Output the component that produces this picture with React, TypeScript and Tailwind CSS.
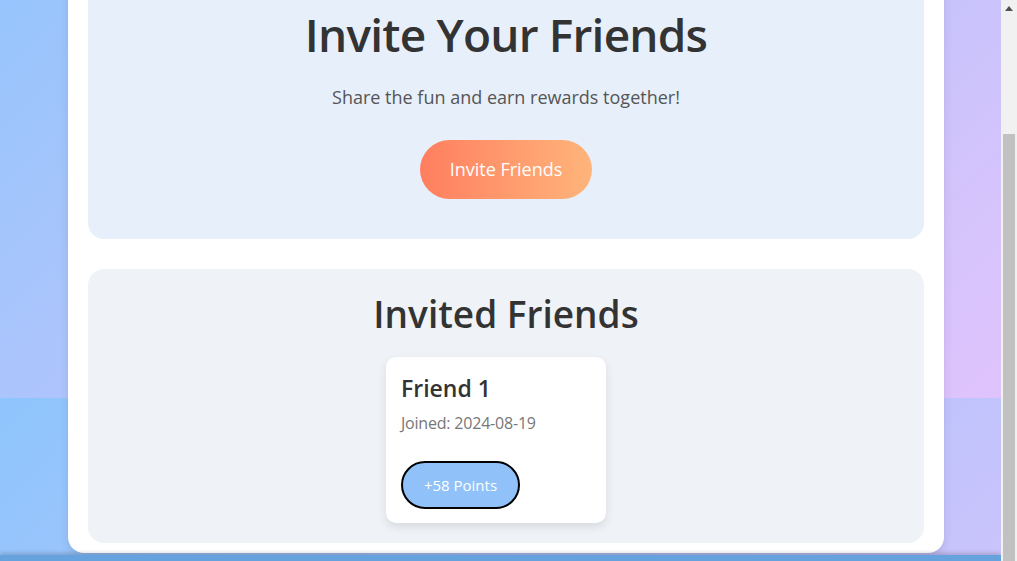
const friends = [{ id: 1, name: "Friend 1", joined: "2024-08-19", points: 58 }];

const Scrollbar = () => (
  <div className="flex w-4 shrink-0 flex-col bg-[#f1f1f1]">
    <div className="flex h-4 items-center justify-center">
      <svg width="8" height="5" viewBox="0 0 8 5">
        <path d="M0 5 L4 0 L8 5 Z" fill="#505050" />
      </svg>
    </div>
    <div className="mt-[118px] flex-1 px-[2px]">
      <div className="h-full w-full bg-[#c1c1c1]" />
    </div>
  </div>
);

export default function App() {
  return (
    <div
      className="flex h-screen w-full overflow-hidden text-[#333]"
      style={{ fontFamily: '"Open Sans", "Noto Sans", sans-serif' }}
    >
      <div className="flex flex-1 flex-col overflow-hidden bg-[linear-gradient(135deg,#8ec5fc,#e0c3fc)] bg-[length:100%_561px] bg-[position:0_-163px]">
        <div className="flex-1 overflow-hidden">
          <div className="-mt-[56px] ml-[68px] w-[876px] rounded-2xl bg-white px-5 pt-5 pb-[10px] shadow-[0_4px_10px_rgba(0,0,0,0.1)]">
            <section className="flex flex-col items-center rounded-2xl bg-[#e7f0fa] p-10">
              <h1 className="mt-[1px] text-[46px] leading-[58px] font-semibold tracking-[-0.8px]">
                Invite Your Friends
              </h1>
              <p className="mt-[20px] text-[18px] leading-[28px] text-[#555]">
                Share the fun and earn rewards together!
              </p>
              <button className="mt-[29px] h-[59px] w-[172px] rounded-full bg-linear-to-r from-[#ff7e5f] to-[#feb47b] text-[18px] text-white">
                Invite Friends
              </button>
            </section>

            <section className="mt-[30px] flex flex-col rounded-2xl bg-[#eff2f7] pt-[23px] pb-5">
              <h2 className="text-center text-[37px] leading-[44px] font-semibold">
                Invited Friends
              </h2>
              <div className="mt-[21px] flex pl-[298px]">
                {friends.map((f) => (
                  <div
                    key={f.id}
                    className="flex h-[166px] w-[220px] flex-col items-start rounded-[10px] bg-white p-[15px] shadow-[0_4px_10px_rgba(0,0,0,0.1)]"
                  >
                    <h3 className="text-[23px] leading-[32px] font-semibold">{f.name}</h3>
                    <p className="mt-[8px] text-[16px] leading-[22px] tracking-[-0.2px] text-[#777]">
                      Joined: {f.joined}
                    </p>
                    <button className="mt-auto mb-[-1px] h-[48px] w-[119px] rounded-full border-2 border-black bg-[#90c2f9] text-[15px] text-white">
                      +{f.points} Points
                    </button>
                  </div>
                ))}
              </div>
            </section>
          </div>
        </div>
        <div className="h-[6px] shrink-0 bg-[#66a3de] shadow-[0_-2px_4px_rgba(0,0,0,0.18)]" />
      </div>
      <Scrollbar />
    </div>
  );
}
